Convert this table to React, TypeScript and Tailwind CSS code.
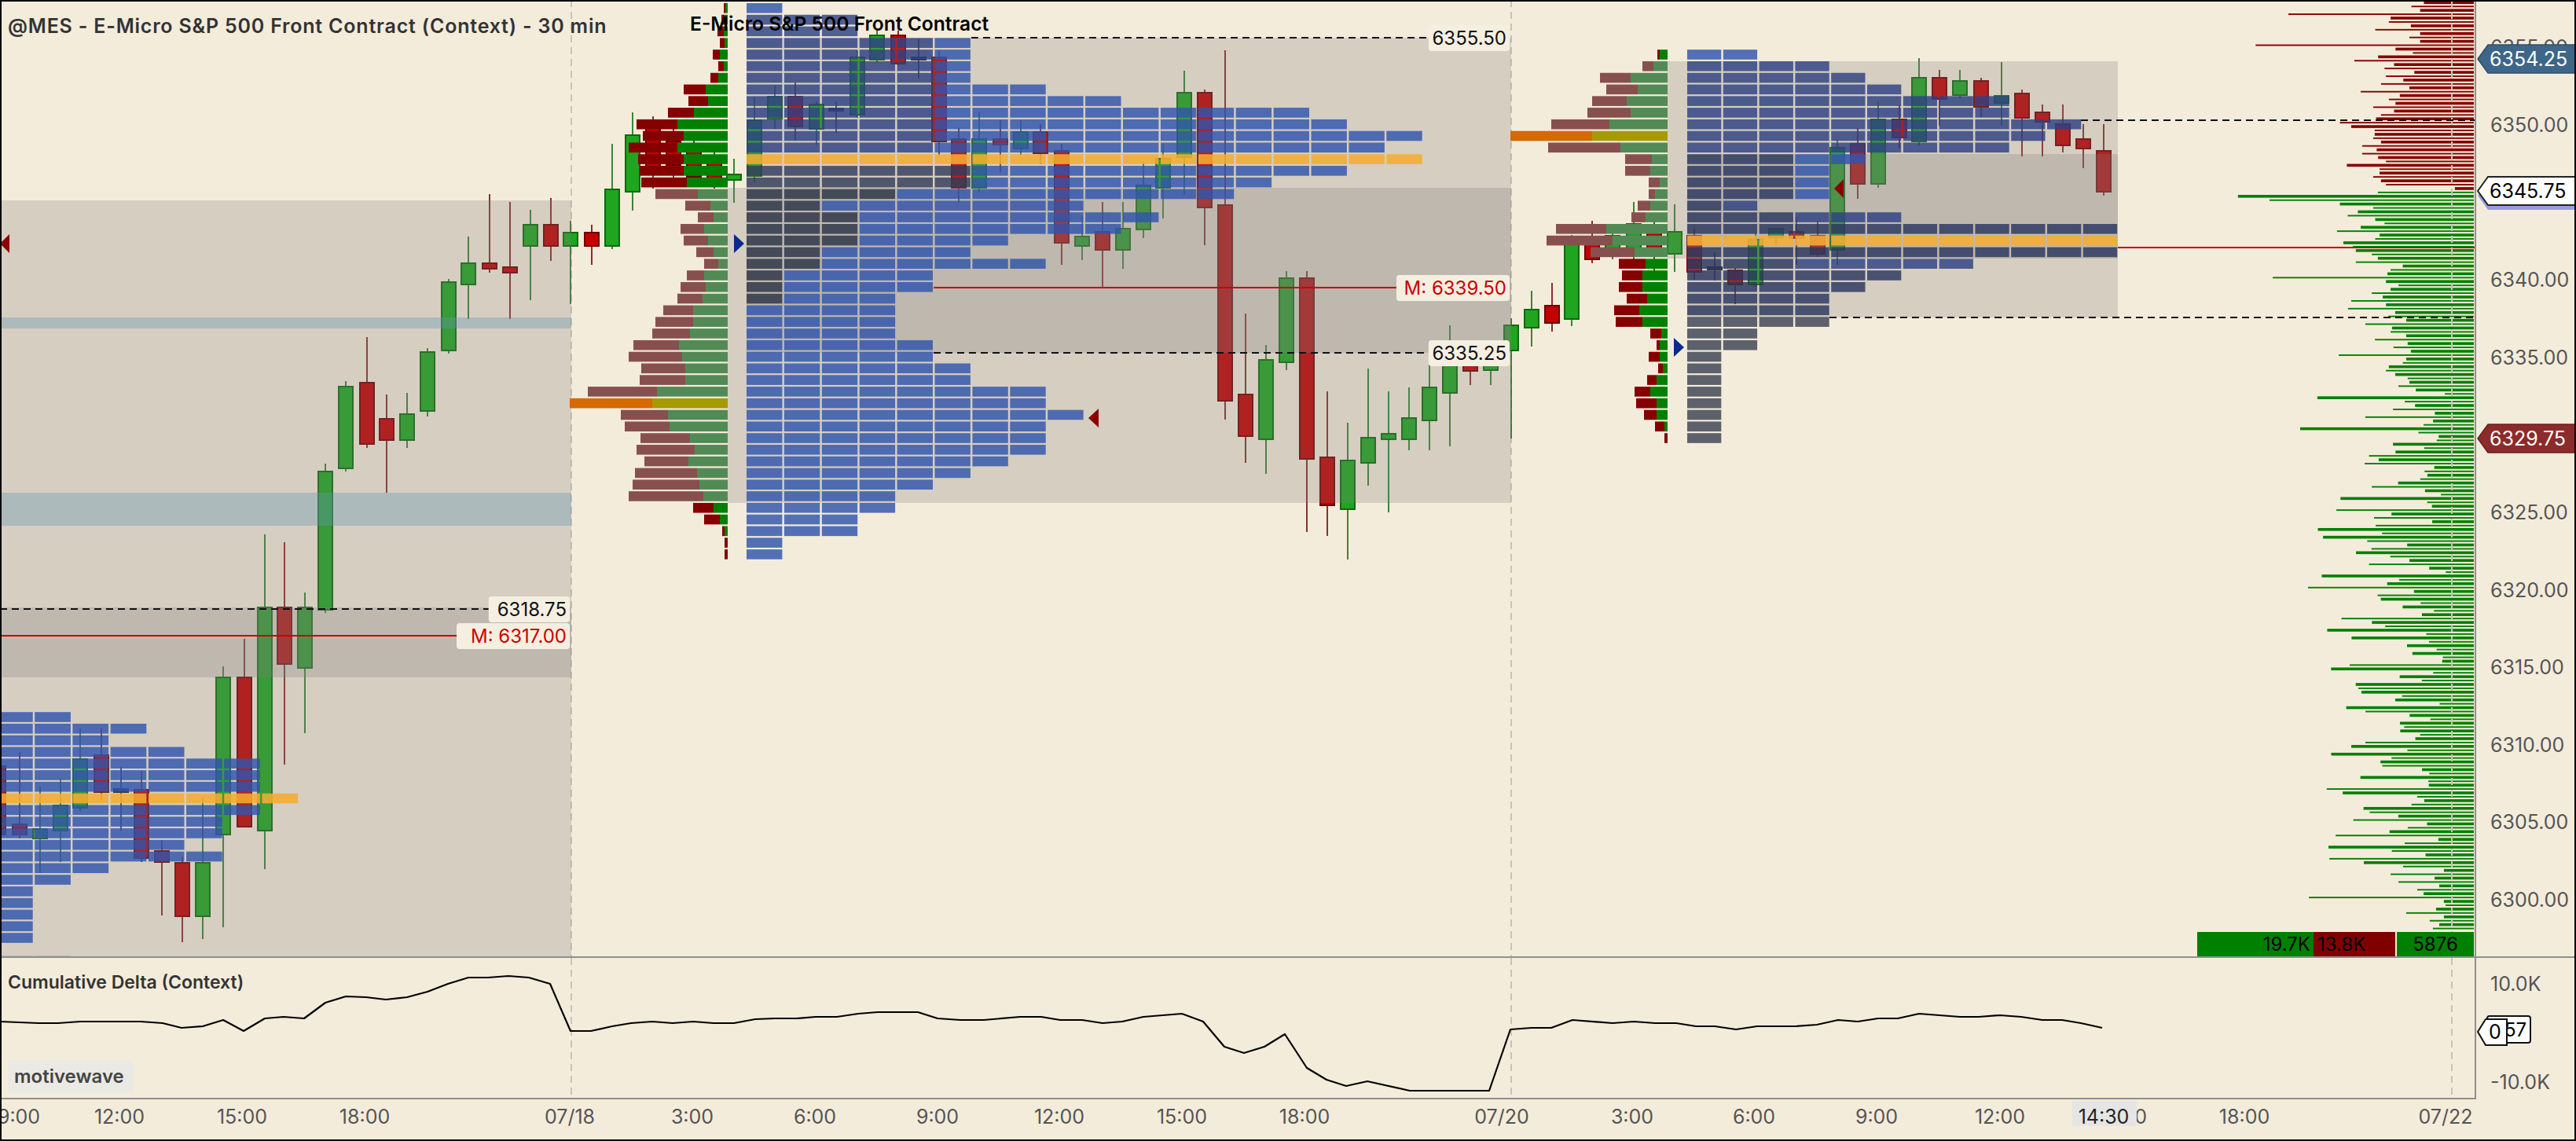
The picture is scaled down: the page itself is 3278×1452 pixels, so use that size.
import React from 'react';

const FONT = 'Inter, "Noto Sans", "Liberation Sans", sans-serif';
const PY = (p: number) => 159 + (6350 - p) * 19.72;
const RY = (i: number) => 4 + 14.79 * i;
const RH = 12.6;

type Cd = [number, number, number, number, number, string];
const candles: Cd[] = [
  [-2, 975, 1062, 955, 1075, 'r'], [25, 1049, 1062, 957, 1067, 'r'], [51, 1055, 1067, 1001, 1111, 'g'],
  [77, 1025, 1057, 991, 1097, 'g'], [102, 966, 1028, 927, 1032, 'g'], [129, 961, 1008, 927, 1018, 'r'],
  [154, 1004, 1008, 976, 1057, 'd'], [180, 1005, 1092, 981, 1097, 'r'], [206, 1083, 1097, 1069, 1165, 'r'],
  [232, 1098, 1166, 1090, 1199, 'r'], [258, 1098, 1166, 1015, 1195, 'g'], [284, 862, 1062, 848, 1180, 'g'],
  [311, 862, 1052, 813, 973, 'r'], [337, 773, 1057, 680, 1106, 'g'], [362, 773, 845, 690, 973, 'r'],
  [388, 773, 850, 754, 933, 'g'], [414, 600, 776, 590, 780, 'g'], [440, 492, 596, 485, 600, 'g'],
  [467, 487, 565, 429, 570, 'r'], [492, 533, 560, 502, 627, 'r'], [518, 527, 560, 500, 570, 'g'],
  [544, 448, 523, 443, 530, 'g'], [571, 359, 446, 355, 450, 'g'], [596, 335, 362, 301, 406, 'g'],
  [623, 335, 342, 247, 347, 'r'], [649, 340, 347, 257, 406, 'r'], [675, 286, 313, 267, 382, 'g'],
  [701, 286, 313, 252, 332, 'r'], [726, 296, 313, 281, 387, 'g'],
  [753, 296, 313, 286, 337, 'r'], [779, 241, 313, 183, 317, 'g'], [805, 172, 244, 143, 268, 'g'],
  [831, 160, 215, 148, 240, 'r'], [857, 180, 210, 163, 227, 'r'], [883, 190, 225, 177, 238, 'r'],
  [909, 205, 230, 193, 240, 'r'], [934, 222, 229, 202, 258, 'g'], [960, 153, 224, 124, 232, 'g'],
  [986, 123, 151, 108, 164, 'g'], [1012, 123, 161, 105, 179, 'r'], [1039, 133, 164, 129, 184, 'g'],
  [1064, 138, 140, 129, 169, 'd'], [1091, 73, 146, 64, 150, 'g'], [1116, 45, 76, 39, 80, 'g'],
  [1143, 45, 81, 39, 83, 'r'], [1169, 73, 76, 50, 100, 'd'], [1195, 73, 180, 64, 198, 'r'],
  [1220, 177, 239, 163, 258, 'r'], [1246, 177, 239, 143, 245, 'g'], [1273, 177, 184, 153, 219, 'r'],
  [1299, 168, 189, 153, 198, 'g'], [1324, 168, 195, 158, 209, 'r'], [1351, 192, 309, 183, 337, 'r'],
  [1377, 301, 313, 275, 331, 'g'], [1403, 295, 318, 257, 366, 'r'], [1429, 291, 318, 257, 342, 'g'],
  [1455, 236, 292, 207, 303, 'g'], [1480, 202, 239, 183, 278, 'g'], [1507, 118, 200, 90, 248, 'g'],
  [1533, 118, 264, 114, 312, 'r'], [1559, 261, 510, 64, 534, 'r'], [1585, 502, 555, 399, 589, 'r'],
  [1611, 458, 559, 439, 603, 'g'], [1637, 354, 461, 345, 471, 'g'], [1663, 354, 584, 345, 677, 'r'],
  [1689, 582, 643, 498, 682, 'r'], [1715, 586, 648, 538, 712, 'g'], [1741, 557, 589, 469, 618, 'g'],
  [1767, 552, 559, 498, 652, 'g'], [1793, 532, 559, 493, 573, 'g'], [1819, 493, 535, 454, 573, 'g'],
  [1845, 458, 500, 414, 568, 'g'], [1871, 462, 472, 445, 490, 'r'], [1897, 462, 471, 440, 490, 'g'],
  [1923, 414, 446, 405, 558, 'g'], [1949, 394, 417, 370, 441, 'g'], [1975, 389, 411, 360, 422, 'r'],
  [2000, 311, 406, 299, 415, 'g'], [2026, 305, 330, 281, 335, 'r'], [2052, 300, 320, 285, 330, 'g'],
  [2079, 285, 318, 257, 330, 'g'], [2105, 295, 325, 281, 345, 'r'], [2131, 295, 323, 260, 346, 'g'],
  [2156, 300, 346, 291, 356, 'r'], [2182, 340, 342, 321, 357, 'd'], [2208, 344, 362, 341, 387, 'r'],
  [2234, 305, 362, 297, 365, 'g'], [2260, 291, 302, 291, 312, 'g'], [2286, 295, 303, 276, 337, 'r'],
  [2313, 300, 323, 281, 327, 'r'], [2338, 188, 318, 178, 337, 'g'], [2364, 183, 234, 163, 253, 'r'],
  [2390, 152, 234, 129, 239, 'g'], [2417, 152, 175, 134, 189, 'r'], [2442, 99, 180, 74, 185, 'g'],
  [2468, 99, 126, 89, 160, 'r'], [2494, 103, 121, 89, 125, 'g'], [2521, 103, 136, 99, 149, 'r'],
  [2547, 122, 131, 79, 160, 'g'], [2573, 119, 150, 114, 199, 'r'], [2599, 143, 155, 133, 199, 'r'],
  [2625, 158, 185, 133, 194, 'r'], [2651, 177, 189, 158, 214, 'r'], [2677, 192, 244, 158, 249, 'r'],
];

const DS: Record<string, [string, string]> = {
  s: ['#850000', '#008000'],
  m: ['#87504f', '#528a56'],
  p: ['#d46a00', '#a59b00'],
};
type DRow = [number, number, number, string];
const d2: DRow[] = [
  [0, 921, 923, 's'], [1, 918, 922, 's'], [2, 913, 921, 's'], [3, 916, 922, 's'], [4, 907, 916, 's'],
  [5, 914, 921, 's'], [6, 904, 914, 's'], [7, 870, 898, 's'], [8, 876, 901, 's'], [9, 850, 883, 's'],
  [10, 810, 862, 's'], [11, 818, 870, 's'], [12, 800, 862, 's'], [13, 812, 870, 's'], [14, 814, 870, 's'],
  [15, 816, 874, 's'],
  [16, 834, 888, 'm'], [17, 872, 904, 'm'], [18, 888, 908, 'm'], [19, 866, 896, 'm'], [20, 870, 901, 'm'],
  [21, 886, 908, 'm'], [22, 896, 914, 'm'], [23, 874, 896, 'm'], [24, 866, 898, 'm'], [25, 862, 894, 'm'],
  [26, 844, 882, 'm'], [27, 834, 882, 'm'], [28, 830, 878, 'm'], [29, 806, 864, 'm'], [30, 800, 868, 'm'],
  [31, 816, 872, 'm'], [32, 814, 872, 'm'], [33, 748, 836, 'm'], [34, 725, 830, 'p'], [35, 790, 850, 'm'],
  [36, 795, 852, 'm'], [37, 815, 878, 'm'], [38, 810, 884, 'm'], [39, 820, 876, 'm'], [40, 808, 887, 'm'],
  [41, 805, 890, 'm'], [42, 800, 895, 'm'],
  [43, 882, 908, 's'], [44, 896, 916, 's'], [45, 919, 922, 's'], [46, 922, 926, 's'], [47, 922, 926, 's'],
];
const d3: DRow[] = [
  [4, 2109, 2112, 's'], [5, 2090, 2104, 'm'], [6, 2036, 2075, 'm'], [7, 2044, 2084, 'm'], [8, 2026, 2070, 'm'],
  [9, 2020, 2075, 'm'], [10, 1974, 2048, 'm'], [11, 1922, 2026, 'p'], [12, 1970, 2062, 'm'], [13, 2068, 2102, 'm'],
  [14, 2068, 2100, 'm'], [15, 2098, 2112, 'm'], [16, 2098, 2106, 'm'], [17, 2084, 2100, 'm'], [18, 2076, 2094, 'm'],
  [19, 1980, 2044, 'm'], [20, 1968, 2052, 'm'], [21, 2024, 2080, 'm'],
  [22, 2060, 2094, 's'], [23, 2064, 2090, 's'], [24, 2060, 2090, 's'], [25, 2070, 2096, 's'], [26, 2054, 2086, 's'],
  [27, 2056, 2090, 's'], [28, 2100, 2114, 's'], [29, 2108, 2112, 's'], [30, 2098, 2112, 's'], [31, 2110, 2116, 's'],
  [32, 2096, 2108, 's'], [33, 2080, 2100, 's'], [34, 2082, 2108, 's'], [35, 2092, 2108, 's'], [36, 2106, 2118, 's'],
  [37, 2118, 2122, 's'],
];

const BC: Record<string, string> = {
  b: 'rgba(48,84,172,0.82)',
  q: 'rgba(45,65,130,0.82)',
  m: 'rgba(49,60,91,0.82)',
  n: 'rgba(42,54,95,0.82)',
  k: 'rgba(38,46,66,0.8)',
  s: 'rgba(60,66,82,0.82)',
  o: 'rgba(245,172,50,0.88)',
};
type PRow = [number, number, string];
const p2counts = [1, 3, 3, 6, 6, 6, 6, 8, 10, 15, 16, 18, 17, 18, 16, 14, 13, 9, 11, 10, 7, 6, 8, 5, 5, 4, 4, 4, 4, 5, 5, 6, 6, 8, 8, 9, 8, 8, 8, 7, 6, 5, 4, 4, 3, 3, 1, 1];
const p2dark: Record<number, number> = { 16: 4, 17: 2, 18: 3, 19: 3, 20: 3, 21: 2, 22: 2, 23: 1, 24: 1, 25: 1 };
const p2: PRow[] = p2counts.map((n, i) => {
  let pat = 'b';
  if (i === 13) pat = 'o';
  else if (i === 0) pat = 'b';
  else if (i <= 2) pat = 'q';
  else if (i <= 12) pat = 'qqqqqb';
  else if (i <= 15) pat = 'mmmmmmb';
  else if (p2dark[i]) pat = 'k'.repeat(p2dark[i]) + 'b';
  return [i, n, pat];
});
const p1counts = [2, 4, 3, 5, 7, 7, 7, 8, 7, 6, 6, 5, 6, 3, 2, 1, 1, 1, 1, 1, 0, 2];
const p1: PRow[] = p1counts.map((n, j) => [61 + j, n, j === 7 ? 'o' : 'b']);
const p3: PRow[] = [
  [4, 2, 'b'], [5, 4, 'q'], [6, 5, 'q'], [7, 6, 'q'], [8, 9, 'q'], [9, 9, 'q'], [10, 11, 'q'], [11, 10, 'q'],
  [12, 9, 'q'], [13, 5, 'nnnb'], [14, 4, 'nnnb'], [15, 4, 'nnnb'], [16, 4, 'nnnb'], [17, 2, 'nq'], [18, 6, 'nnnq'],
  [19, 12, 'n'], [20, 12, 'o'], [21, 12, 'n'], [22, 8, 'nnnq'], [23, 6, 'n'], [24, 5, 'n'], [25, 4, 'n'], [26, 4, 'n'],
  [27, 4, 's'], [28, 2, 's'], [29, 2, 's'], [30, 1, 's'], [31, 1, 's'], [32, 1, 's'], [33, 1, 's'], [34, 1, 's'],
  [35, 1, 's'], [36, 1, 's'], [37, 1, 's'],
];

function rng(seed: number) {
  return () => {
    seed |= 0;
    seed = (seed + 0x6d2b79f5) | 0;
    let t = Math.imul(seed ^ (seed >>> 15), 1 | seed);
    t = (t + Math.imul(t ^ (t >>> 7), 61 | t)) ^ t;
    return ((t ^ (t >>> 14)) >>> 0) / 4294967296;
  };
}

const redZ = [1043, 1000, 1030, 575, 928, 922, 998, 875, 1030, 993, 1030, 462, 945, 1005, 885, 803, 940, 907, 1010, 912, 972, 895, 993, 825, 960, 922, 945, 868, 940, 895, 878, 753, 792, 873, 873, 868, 895, 830, 880, 830, 885, 912, 777, 890, 890, 868, 895, 912, 1150];
const greenZ = [884, 401, 510, 753, 868, 815, 780, 875, 907, 825, 743, 890, 875, 765, 798, 808, 863, 884, 808, 970, 928, 917, 521, 912, 955, 928, 863, 901, 792, 912, 781, 944, 920, 982, 841, 933, 928, 982, 874, 987, 938, 998, 749, 982, 970, 922, 912, 944, 987, 993, 955, 1015];
const bottomZ = [971, 1112, 928, 1080, 955, 1096, 1020, 1042, 646, 1112, 1118, 1085, 982, 1112, 1063, 1096, 1074];

type HB = { y: number; x: number; h: number; c: string };
const hist: HB[] = (() => {
  const out: HB[] = [];
  const r = rng(7);
  const RIGHT = 3148;
  for (let k = 0; k <= 239; k++) {
    const y = 3.3 + 4.93 * k;
    let x: number;
    if (k < redZ.length) x = 2700 + redZ[k] / 2.713;
    else if (k < redZ.length + greenZ.length) x = 2700 + greenZ[k - redZ.length] / 2.713;
    else if (k >= 223) x = 2700 + bottomZ[k - 223] / 2.713;
    else {
      const v = r();
      let w = 35 + v * v * 150 + r() * 30;
      if (k === 110) w = 221;
      if (k === 151) w = 211;
      if (k === 171) w = 158;
      if (k === 191) w = 138;
      if (k === 131) w = 175;
      x = RIGHT - w;
    }
    const h = k % 2 === 0 ? 3.6 : 1.9;
    out.push({ y: y - h / 2, x, h, c: y < 244 ? '#850000' : '#008000' });
  }
  return out;
})();

const deltaPts: [number, number][] = [
  [0, 1300], [49, 1302], [74, 1302], [102, 1300], [179, 1300], [207, 1302], [231, 1308], [258, 1306], [284, 1298],
  [310, 1312], [337, 1296], [361, 1294], [387, 1296], [414, 1276], [440, 1268], [466, 1269], [491, 1272], [518, 1269],
  [544, 1262], [570, 1252], [596, 1244], [621, 1244], [647, 1242], [673, 1244], [700, 1252], [726, 1312], [752, 1312],
  [779, 1306], [803, 1302], [830, 1300], [856, 1302], [882, 1300], [908, 1302], [934, 1302], [961, 1297], [986, 1296],
  [1014, 1296], [1038, 1294], [1065, 1294], [1092, 1290], [1117, 1288], [1168, 1288], [1193, 1296], [1222, 1298],
  [1252, 1298], [1298, 1294], [1325, 1294], [1349, 1298], [1377, 1298], [1403, 1302], [1428, 1300], [1455, 1294],
  [1504, 1290], [1531, 1300], [1558, 1332], [1583, 1340], [1609, 1332], [1635, 1316], [1663, 1359], [1688, 1374],
  [1713, 1382], [1740, 1376], [1794, 1388], [1895, 1388], [1922, 1310], [1949, 1308], [1974, 1308], [2001, 1298],
  [2052, 1302], [2079, 1300], [2106, 1302], [2133, 1302], [2158, 1306], [2182, 1306], [2209, 1310], [2236, 1306],
  [2285, 1306], [2312, 1304], [2339, 1298], [2364, 1300], [2390, 1296], [2415, 1296], [2442, 1290], [2494, 1294],
  [2518, 1294], [2545, 1292], [2572, 1294], [2599, 1298], [2624, 1298], [2648, 1302], [2675, 1308],
];

function Candle({ c }: { c: Cd }) {
  const [x, bt, bb, wt, wb, k] = c;
  const fill = k === 'g' ? '#1fa51f' : k === 'r' ? '#c20000' : '#1d1f3c';
  const stroke = k === 'g' ? '#0d6a0d' : k === 'r' ? '#6e0000' : '#1d1f3c';
  const h = Math.max(bb - bt, 3);
  return (
    <g>
      <line x1={x} x2={x} y1={wt} y2={wb} stroke={stroke} strokeWidth={1.6} />
      <rect x={x - 9} y={bt} width={18} height={h} fill={fill} stroke={stroke} strokeWidth={2} />
    </g>
  );
}

function Profile({ x0, pitch, rows }: { x0: number; pitch: number; rows: PRow[] }) {
  const out: React.ReactNode[] = [];
  rows.forEach(([i, n, pat]) => {
    for (let j = 0; j < n; j++) {
      const c = pat[Math.min(j, pat.length - 1)];
      out.push(<rect key={i + '-' + j} x={x0 + j * pitch} y={RY(i)} width={pitch - 2.5} height={RH} fill={BC[c]} />);
    }
  });
  return <g>{out}</g>;
}

function Delta({ right, rows }: { right: number; rows: DRow[] }) {
  return (
    <g>
      {rows.map(([i, rl, gl, s]) => (
        <g key={i}>
          <rect x={rl} y={RY(i)} width={Math.max(gl - rl, 0)} height={RH} fill={DS[s][0]} />
          <rect x={gl} y={RY(i)} width={Math.max(right - gl, 0)} height={RH} fill={DS[s][1]} />
        </g>
      ))}
    </g>
  );
}

function LineLabel({ x1, x2, y, text, red, dashed }: { x1: number; x2: number; y: number; text: string; red?: boolean; dashed?: boolean }) {
  const w = text.length * 13.6 + 10;
  return (
    <g>
      <line x1={x1} x2={x2 - w} y1={y} y2={y} stroke={red ? '#cc0000' : '#111'} strokeWidth={2} strokeDasharray={dashed ? '9 6' : undefined} />
      <rect x={x2 - w} y={y - 16} width={w - 2} height={33} rx={4} fill="#f5efe2" />
      <text x={x2 - 6} y={y + 9} textAnchor="end" fontSize={24} fill={red ? '#cc0000' : '#111'} fontFamily={FONT}>
        {text}
      </text>
    </g>
  );
}

const OV = 'rgba(130,127,125,0.27)';
const tagPts = (y: number, h = 36) => `3153,${y} 3166,${y - h / 2} 3277,${y - h / 2} 3277,${y + h / 2} 3166,${y + h / 2}`;

function MainChart() {
  return (
    <svg width={3149} height={1217} viewBox="0 0 3149 1217" className="block">
      {[727, 1923].map((x) => (
        <line key={x} x1={x} x2={x} y1={0} y2={1217} stroke="#c9c3b7" strokeWidth={2} strokeDasharray="9 6" />
      ))}
      {candles.map((c, i) => (
        <Candle key={i} c={c} />
      ))}
      <rect x={0} y={255} width={727} height={962} fill={OV} />
      <rect x={0} y={773} width={727} height={89} fill={OV} />
      <rect x={0} y={404} width={727} height={14} fill="rgba(100,150,180,0.35)" />
      <rect x={0} y={627} width={727} height={42} fill="rgba(100,150,180,0.35)" />
      <rect x={950} y={48} width={973} height={592} fill={OV} />
      <rect x={926} y={239} width={24} height={401} fill={OV} />
      <rect x={950} y={239} width={973} height={210} fill={OV} />
      <rect x={2147} y={78} width={548} height={326} fill={OV} />
      <rect x={2122} y={78} width={25} height={251} fill={OV} />
      <rect x={2147} y={196} width={548} height={133} fill={OV} />

      <Profile x0={-4} pitch={48.2} rows={p1} />
      <Profile x0={950} pitch={47.9} rows={p2} />
      <Profile x0={2147} pitch={45.8} rows={p3} />
      <Delta right={926} rows={d2} />
      <Delta right={2122} rows={d3} />

      <line x1={2695} x2={3149} y1={315} y2={315} stroke="#cc0000" strokeWidth={2} />
      {hist.map((b, i) => (
        <rect key={i} x={b.x} y={b.y} width={3148 - b.x} height={b.h} fill={b.c} />
      ))}
      <line x1={3120} x2={3120} y1={0} y2={1217} stroke="#c9c3b7" strokeWidth={2} strokeDasharray="9 6" />
      <line x1={2648} x2={3149} y1={153} y2={153} stroke="#111" strokeWidth={2} strokeDasharray="9 6" />
      <line x1={2328} x2={3149} y1={404} y2={404} stroke="#111" strokeWidth={2} strokeDasharray="9 6" />

      <LineLabel x1={0} x2={727} y={775} text="6318.75" dashed />
      <LineLabel x1={0} x2={727} y={809} text="M: 6317.00" red />
      <LineLabel x1={1236} x2={1923} y={48} text="6355.50" dashed />
      <LineLabel x1={1188} x2={1923} y={449} text="6335.25" dashed />
      <LineLabel x1={1188} x2={1923} y={366} text="M: 6339.50" red />

      <polygon points="0,310 12,298 12,322" fill="#8b0000" />
      <polygon points="947,310 934,298 934,322" fill="#0a2a8c" />
      <polygon points="1385,532 1398,520 1398,544" fill="#8b0000" />
      <polygon points="2334,240 2346,228 2346,252" fill="#8b0000" />
      <polygon points="2143,442 2130,430 2130,454" fill="#0a2a8c" />

      <rect x={2796} y={1186} width={148} height={31} fill="#008000" />
      <rect x={2944} y={1186} width={104} height={31} fill="#800000" />
      <rect x={3050} y={1186} width={98} height={31} fill="#008000" />
      <text x={2940} y={1210} textAnchor="end" fontSize={24} fill="#000" fontFamily={FONT}>19.7K</text>
      <text x={2949} y={1210} fontSize={24} fill="#000" fontFamily={FONT}>13.8K</text>
      <text x={3099} y={1210} textAnchor="middle" fontSize={24} fill="#000" fontFamily={FONT}>5876</text>

      <text x={10} y={42} fontSize={25} fontWeight={600} letterSpacing={0.8} fill="#333" fontFamily={FONT}>
        {'@MES - E-Micro S&P 500 Front Contract (Context) - 30 min'}
      </text>
      <text x={878} y={39} fontSize={24.6} fontWeight={600} fill="#000" fontFamily={FONT}>
        {'E-Micro S&P 500 Front Contract'}
      </text>
    </svg>
  );
}

function PriceAxis() {
  const labels = [6355, 6350, 6345, 6340, 6335, 6330, 6325, 6320, 6315, 6310, 6305, 6300];
  return (
    <svg width={127} height={1217} viewBox="3151 0 127 1217" className="block overflow-visible">
      {labels.map((p) => (
        <text key={p} x={3169} y={PY(p) + 9} fontSize={25} fill="#555" fontFamily={FONT}>
          {p.toFixed(2)}
        </text>
      ))}
      <polygon points={tagPts(75)} fill="#3e6688" stroke="#2e4d68" strokeWidth={1.5} />
      <text x={3168} y={84} fontSize={25} fill="#fff" fontFamily={FONT}>6354.25</text>
      <polygon points={tagPts(249)} fill="#9b9be0" />
      <polygon points={tagPts(243)} fill="#fff" stroke="#222" strokeWidth={2} />
      <text x={3168} y={252} fontSize={25} fill="#000" fontFamily={FONT}>6345.75</text>
      <polygon points={tagPts(558)} fill="#8c2b2b" stroke="#6e1e1e" strokeWidth={1.5} />
      <text x={3168} y={567} fontSize={25} fill="#fff" fontFamily={FONT}>6329.75</text>
    </svg>
  );
}

function IndicatorChart() {
  return (
    <svg width={3149} height={178} viewBox="0 1219 3149 178" className="block">
      {[727, 1923, 3120].map((x) => (
        <line key={x} x1={x} x2={x} y1={1219} y2={1397} stroke="#c9c3b7" strokeWidth={2} strokeDasharray="9 6" />
      ))}
      <polyline points={deltaPts.map((p) => p.join(',')).join(' ')} fill="none" stroke="#000" strokeWidth={2.2} strokeLinejoin="round" />
      <text x={10} y={1258} fontSize={23} fontWeight={600} fill="#333" fontFamily={FONT}>
        Cumulative Delta (Context)
      </text>
      <rect x={10} y={1349} width={160} height={42} rx={4} fill="#ebe9e4" />
      <text x={18} y={1378} fontSize={24} fontWeight={600} fill="#444" fontFamily={FONT}>
        motivewave
      </text>
    </svg>
  );
}

function IndicatorAxis() {
  return (
    <svg width={127} height={180} viewBox="3151 1219 127 180" className="block overflow-visible">
      <text x={3169} y={1261} fontSize={25} fill="#555" fontFamily={FONT}>10.0K</text>
      <text x={3169} y={1386} fontSize={25} fill="#555" fontFamily={FONT}>-10.0K</text>
      <rect x={3165} y={1293} width={55} height={34} rx={3} fill="#fff" stroke="#111" strokeWidth={2} />
      <text x={3172} y={1319} fontSize={24} fill="#000" fontFamily={FONT}>657</text>
      <polygon points="3153,1313 3163,1297 3190,1297 3190,1330 3163,1330" fill="#fff" stroke="#111" strokeWidth={2} />
      <text x={3167} y={1322} fontSize={25} fill="#000" fontFamily={FONT}>0</text>
    </svg>
  );
}

function TimeAxis() {
  const t: [number, string][] = [
    [24, '9:00'], [152, '12:00'], [308, '15:00'], [464, '18:00'], [725, '07/18'], [881, '3:00'], [1037, '6:00'],
    [1193, '9:00'], [1348, '12:00'], [1504, '15:00'], [1660, '18:00'], [1911, '07/20'], [2077, '3:00'],
    [2232, '6:00'], [2388, '9:00'], [2545, '12:00'], [2700, '15:00'], [2856, '18:00'], [3112, '07/22'],
  ];
  return (
    <svg width={3278} height={53} viewBox="0 1399 3278 53" className="block">
      {t.map(([x, s]) => (
        <text key={x} x={x} y={1430} textAnchor="middle" fontSize={25} fill="#555" fontFamily={FONT}>
          {s}
        </text>
      ))}
      <rect x={2637} y={1401} width={82} height={32} fill="#e5e5e5" />
      <text x={2677} y={1430} textAnchor="middle" fontSize={25} fill="#222" fontFamily={FONT}>14:30</text>
    </svg>
  );
}

export default function App() {
  return (
    <div className="relative w-[3278px] h-[1452px] overflow-hidden bg-[#f4ecdb] flex flex-col">
      <div className="flex h-[1219px] border-b-2 border-[#8f8f8f]">
        <div className="w-[3149px] h-[1217px]">
          <MainChart />
        </div>
        <div className="flex-1 border-l-2 border-[#8f8f8f]">
          <PriceAxis />
        </div>
      </div>
      <div className="flex h-[180px]">
        <div className="w-[3149px] border-b-2 border-[#8f8f8f]">
          <IndicatorChart />
        </div>
        <div className="flex-1 border-l-2 border-[#8f8f8f]">
          <IndicatorAxis />
        </div>
      </div>
      <div className="flex-1">
        <TimeAxis />
      </div>
      <div className="absolute inset-0 border-2 border-black pointer-events-none" />
    </div>
  );
}
